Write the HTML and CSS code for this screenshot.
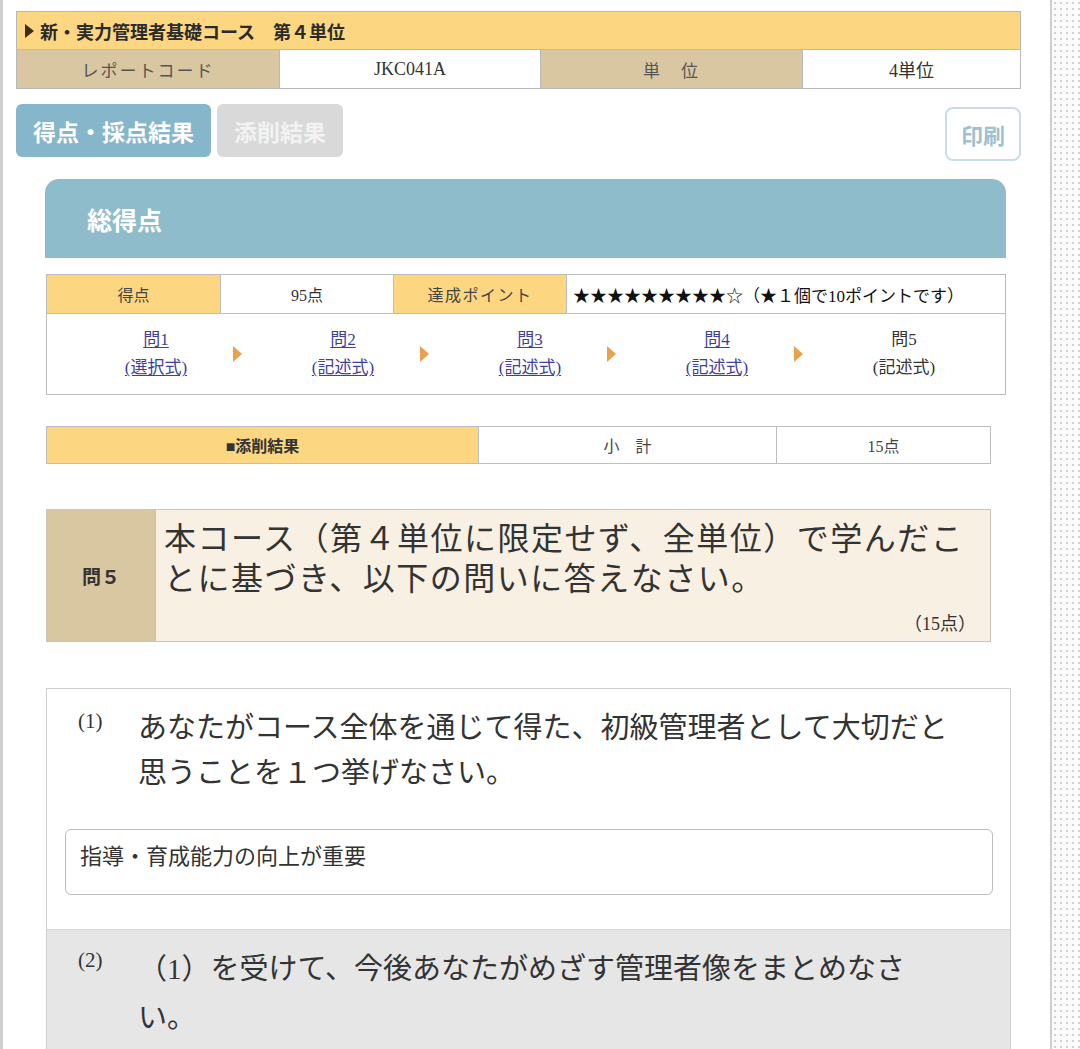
FILE: index.html
```html
<!DOCTYPE html>
<html lang="ja">
<head>
<meta charset="utf-8">
<title>添削結果</title>
<link rel="stylesheet" href="styles.css">
</head>
<body>
<div class="shell">
  <main class="page">
    <div class="head">
      <div class="head-title"><span class="tri"></span>新・実力管理者基礎コース　第４単位</div>
      <div class="head-row">
        <div class="hcell label">レポートコード</div>
        <div class="hcell">JKC041A</div>
        <div class="hcell label">単　位</div>
        <div class="hcell">4単位</div>
      </div>
    </div>

    <div class="tabs">
      <a class="tab active">得点・採点結果</a>
      <a class="tab off">添削結果</a>
      <a class="print">印刷</a>
    </div>

    <section class="result">
      <h2 class="total">総得点</h2>

      <div class="score">
        <div class="score-row">
          <div class="sc label">得点</div>
          <div class="sc">95点</div>
          <div class="sc label spaced">達成ポイント</div>
          <div class="sc stars">★★★★★★★★★☆（★１個で10ポイントです）</div>
        </div>
        <div class="steps">
          <a class="step link"><span>問1</span><span>(選択式)</span></a>
          <span class="arrow"></span>
          <a class="step link"><span>問2</span><span>(記述式)</span></a>
          <span class="arrow"></span>
          <a class="step link"><span>問3</span><span>(記述式)</span></a>
          <span class="arrow"></span>
          <a class="step link"><span>問4</span><span>(記述式)</span></a>
          <span class="arrow"></span>
          <div class="step"><span>問5</span><span>(記述式)</span></div>
        </div>
      </div>

      <div class="sub">
        <div class="subc label">■添削結果</div>
        <div class="subc">小　計</div>
        <div class="subc">15点</div>
      </div>

      <div class="q5">
        <div class="q5-label">問５</div>
        <div class="q5-body">
          <p class="q5-text">本コース（第４単位に限定せず、全単位）で学んだこ<br>とに基づき、以下の問いに答えなさい。</p>
          <div class="q5-pts">（15点）</div>
        </div>
      </div>

      <div class="qbox">
        <div class="part">
          <div class="qline">
            <span class="qnum">(1)</span>
            <p class="qtext">あなたがコース全体を通じて得た、初級管理者として大切だと<br>思うことを１つ挙げなさい。</p>
          </div>
          <div class="answer">指導・育成能力の向上が重要</div>
        </div>
        <div class="part gray">
          <div class="qline">
            <span class="qnum">(2)</span>
            <p class="qtext tall">（1）を受けて、今後あなたがめざす管理者像をまとめなさ<br>い。</p>
          </div>
        </div>
      </div>
    </section>
  </main>
  <aside class="side"></aside>
</div>
</body>
</html>
```

FILE: styles.css
```css
* { box-sizing: border-box; }

html, body {
  margin: 0;
  padding: 0;
  overflow: hidden;
  background: #fff;
}

body {
  font-family: "Liberation Serif", "Noto Sans CJK JP", serif;
  color: #333;
}

.shell {
  display: flex;
  height: 1049px;
}

.page {
  flex: none;
  width: 1052px;
  border-left: 3px solid #cfcfcf;
  border-right: 2px solid #cfcfcf;
  padding: 11px 0 0 13px;
}

.side {
  flex: 1;
  background: #fbfbfb radial-gradient(circle, #d2d2d2 0.9px, transparent 1.4px) 0 0 / 6px 6px;
}

/* header table */
.head {
  width: 1005px;
  border: 1px solid #b9b9b9;
}

.head-title {
  height: 38px;
  background: #fcd680;
  border-bottom: 1px solid #b9b9b9;
  display: flex;
  align-items: center;
  padding-left: 8px;
  font-size: 18px;
  font-weight: bold;
  color: #2a2a2a;
}

.tri {
  width: 0;
  height: 0;
  border-left: 9px solid #3e2c14;
  border-top: 7px solid transparent;
  border-bottom: 7px solid transparent;
  margin-right: 6px;
}

.head-row {
  display: grid;
  grid-template-columns: 262px 261px 262px 1fr;
  height: 38px;
}

.hcell {
  display: flex;
  align-items: center;
  justify-content: center;
  font-size: 18px;
  color: #333;
  background: #fff;
}

.hcell.label {
  background: #d9c7a1;
  color: #555;
  font-size: 17px;
  letter-spacing: 2px;
}

.hcell + .hcell { border-left: 1px solid #b9b9b9; }

/* tabs */
.tabs {
  display: flex;
  align-items: flex-start;
  gap: 6px;
  width: 1005px;
  margin-top: 15px;
}

.tab {
  height: 53px;
  padding: 0 17px;
  border-radius: 6px;
  display: flex;
  align-items: center;
  font-family: "Noto Sans CJK JP", sans-serif;
  font-weight: bold;
  font-size: 23px;
  color: #fff;
}

.tab.active { background: #86b6ca; }
.tab.off { background: #d9d9d9; color: #f2f2f2; }

.print {
  margin-left: auto;
  margin-top: 3px;
  width: 76px;
  height: 54px;
  border: 2px solid #cadde6;
  border-radius: 8px;
  display: flex;
  align-items: center;
  justify-content: center;
  font-family: "Noto Sans CJK JP", sans-serif;
  font-weight: bold;
  font-size: 22px;
  color: #9fc1d0;
}

/* result */
.result {
  margin-left: 29px;
  width: 966px;
}

.total {
  margin: 18px 0 0;
  width: 961px;
  height: 79px;
  background: #8fbccb;
  border-radius: 14px 14px 0 0;
  display: flex;
  align-items: center;
  padding-left: 42px;
  font-family: "Noto Sans CJK JP", sans-serif;
  font-size: 25px;
  font-weight: bold;
  color: #fff;
}

.score {
  margin: 16px 0 0 1px;
  width: 960px;
  border: 1px solid #bdbdbd;
}

.score-row {
  display: grid;
  grid-template-columns: 173px 173px 173px 1fr;
  height: 39px;
  border-bottom: 1px solid #bdbdbd;
}

.sc {
  display: flex;
  align-items: center;
  justify-content: center;
  font-size: 16px;
  color: #333;
}

.sc + .sc { border-left: 1px solid #bdbdbd; }

.sc.label { background: #fcd680; color: #444; }
.sc.spaced { letter-spacing: 1.5px; }

.sc.stars {
  justify-content: flex-start;
  padding-left: 6px;
  font-size: 17px;
  color: #111;
}

.steps {
  display: grid;
  grid-template-columns: 150px 37px 150px 37px 150px 37px 150px 37px 150px;
  align-items: center;
  height: 80px;
  padding-left: 34px;
}

.step {
  display: flex;
  flex-direction: column;
  align-items: center;
  font-size: 17px;
  line-height: 28px;
  color: #333;
}

.step.link { color: #3f3f9c; }
.step.link span { text-decoration: underline; text-underline-offset: 2px; }

.arrow {
  width: 0;
  height: 0;
  margin-left: 2px;
  border-left: 9px solid #e9a04f;
  border-top: 8px solid transparent;
  border-bottom: 8px solid transparent;
}

.sub {
  margin: 31px 0 0 1px;
  width: 945px;
  height: 38px;
  border: 1px solid #bdbdbd;
  display: grid;
  grid-template-columns: 431px 298px 1fr;
}

.subc {
  display: flex;
  align-items: center;
  justify-content: center;
  font-size: 16px;
  color: #444;
}

.subc + .subc { border-left: 1px solid #bdbdbd; }
.subc.label { background: #fcd680; font-weight: bold; color: #333; }

/* question 5 */
.q5 {
  margin: 45px 0 0 1px;
  width: 945px;
  height: 133px;
  border: 1px solid #cbc4b8;
  display: grid;
  grid-template-columns: 108px 1fr;
}

.q5-label {
  background: #d9c7a1;
  display: flex;
  align-items: center;
  justify-content: center;
  font-size: 19px;
  font-weight: bold;
  color: #333;
}

.q5-body {
  background: #f8f0e3;
  padding: 9px 14px 0 8px;
  border-left: 1px solid #cbc4b8;
}

.q5-text {
  margin: 0;
  font-size: 32px;
  line-height: 40px;
  letter-spacing: 1.5px;
  color: #333;
}

.q5-pts {
  text-align: right;
  font-size: 18px;
  line-height: 22px;
  margin-top: 14px;
  color: #333;
}

/* answers */
.qbox {
  margin: 46px 0 0 1px;
  width: 965px;
  border: 1px solid #cfcfcf;
  border-bottom: none;
}

.part {
  padding: 17px 0 34px 31px;
}

.part.gray {
  background: #e6e6e6;
  border-top: 1px solid #d8d8d8;
  padding: 15px 0 40px 31px;
}

.qline {
  display: flex;
  align-items: flex-start;
}

.qnum {
  flex: none;
  width: 60px;
  font-size: 21px;
  line-height: 22px;
  padding-top: 4px;
  color: #333;
}

.qtext {
  margin: 0;
  font-size: 29px;
  line-height: 45px;
  color: #333;
}

.qtext.tall { line-height: 49px; }

.answer {
  margin: 33px 0 0 -13px;
  width: 928px;
  height: 66px;
  border: 1px solid #bdbdbd;
  border-radius: 6px;
  padding: 10px 14px;
  font-family: "Noto Sans CJK JP", sans-serif;
  font-size: 22px;
  line-height: 28px;
  color: #333;
}
```
